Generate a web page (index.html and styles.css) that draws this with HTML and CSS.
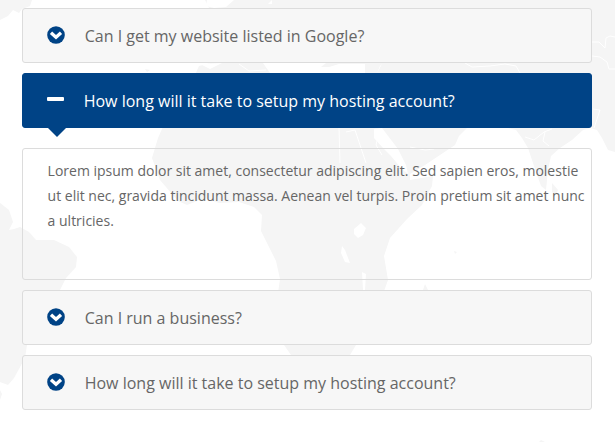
FILE: index.html
```html
<!DOCTYPE html>
<html lang="en">
<head>
<meta charset="utf-8">
<title>FAQ</title>
<link rel="stylesheet" href="styles.css">
</head>
<body>
<svg class="map" viewBox="0 0 615 442" aria-hidden="true">
  <g class="land">
    <path d="M0 0H32L30 6 22 9 19 13 13 10 8 16 0 20Z"/>
    <path d="M205 0H615V152L608 150 602 138 597 130 590 128 583 130 572 140 560 148 551 156 548 170 546 190 541 186 534 166 528 148 522 138 516 130 508 128H467L459 136 455 145 440 155 425 165 410 174 410 180 433 176 432 186 422 205 407 219 390 238 384 256 388 280 380 302 365 320 361 335 356 345 350 355H291L284 345 276 307 280 279 276 261 261 231 262 215 254 207 239 202 219 203 205 198 187 205 178 201 160 180 152 158 158 138 166 120 184 98 195 75 199 66 215 62 203 40 215 20Z"/>
    <path d="M0 203 9 210 13 222 9 230 14 229 20 227 29 232 36 240 54 240 69 247 77 257 76 267 66 278 60 290 45 310 27 345 25 358 14 378 8 385 0 382Z"/>
    <path d="M0 390 2 394 0 400ZM145 69 150 70 147 72ZM541 440 545 442H539ZM425 284 428 290 423 290ZM454 251 457 252 455 254ZM552 183 558 190 556 195 552 192Z"/>
  </g>
  <g class="water">
    <path d="M207 0H234L226 7 214 8 206 6ZM272 0 268 4 272 4ZM263 63H326L321 67 329 67 339 64H365V73H270ZM200 64 222 63 210 69ZM374 129 382 128 398 149 406 165 408 174 401 168 391 156 383 148 374 138ZM354 229 361 223 366 228 363 235 358 238 354 234ZM342 246 345 250 350 263 345 262 341 253ZM362 272 366 274 365 290H363ZM380 66 382 64 377 73Z"/>
  </g>
  <g class="lines">
    <path d="M339 128 340 163M346 132 355 130 366 163M380 128 376 145 382 155M592 42 599 42 605 48 606 38 610 36 615 37M592 56 600 57 607 62 609 69 615 69M465 63 472 67 490 66 505 64 516 66 520 73M239 64 249 71 266 70M593 109 600 110 594 128M525 137 534 140 544 132 552 129M410 147 425 150 434 149M545 132 543 141 549 146"/>
  </g>
</svg>
<main class="faq">
  <section class="question">
    <svg class="icon" viewBox="0 0 18 18"><circle cx="9" cy="9" r="8.8"/><path d="M4 6.8 9 11.2 14 6.8"/></svg>
    <h2>Can I get my website listed in Google?</h2>
  </section>
  <section class="question active">
    <span class="minus"></span>
    <h2>How long will it take to setup my hosting account?</h2>
  </section>
  <section class="answer">
    <p>Lorem ipsum dolor sit amet, consectetur adipiscing elit. Sed sapien eros, molestie ut elit nec, gravida tincidunt massa. Aenean vel turpis. Proin pretium sit amet nunc a ultricies.</p>
  </section>
  <section class="question">
    <svg class="icon" viewBox="0 0 18 18"><circle cx="9" cy="9" r="8.8"/><path d="M4 6.8 9 11.2 14 6.8"/></svg>
    <h2>Can I run a business?</h2>
  </section>
  <section class="question">
    <svg class="icon" viewBox="0 0 18 18"><circle cx="9" cy="9" r="8.8"/><path d="M4 6.8 9 11.2 14 6.8"/></svg>
    <h2>How long will it take to setup my hosting account?</h2>
  </section>
</main>
</body>
</html>
```
FILE: styles.css
```css
* { box-sizing: border-box; }
body {
  margin: 0;
  height: 442px;
  overflow: hidden;
  background: #fff;
  color: #666;
  font-family: "Open Sans", sans-serif;
}
.map {
  position: absolute;
  top: 0;
  left: 0;
  width: 615px;
  height: 442px;
  z-index: -1;
}
.land { fill: #f5f5f5; }
.water { fill: #fff; }
.lines { fill: none; stroke: #fff; stroke-width: 1; }
.faq {
  display: flex;
  flex-direction: column;
  gap: 10px;
  padding: 8px 23px 0 22px;
}
.question {
  position: relative;
  display: flex;
  align-items: center;
  height: 55px;
  padding-left: 24px;
  border: 1px solid #dcdcdc;
  border-radius: 3px;
  background: #f7f7f7;
}
.question h2 {
  margin: 0 0 0 19.7px;
  font-size: 16px;
  font-weight: 400;
  line-height: 24px;
  white-space: nowrap;
}
.icon {
  width: 18px;
  height: 18px;
  margin-bottom: 2px;
  fill: #004386;
}
.icon path {
  fill: none;
  stroke: #fff;
  stroke-width: 3.4;
}
.active {
  border-color: #004386;
  background: #004386;
  color: #fff;
}
.active::after {
  content: "";
  position: absolute;
  top: 54px;
  left: 25px;
  border: solid transparent;
  border-width: 9px 9px 0;
  border-top-color: #004386;
}
.minus {
  width: 17px;
  height: 4px;
  margin-bottom: 3px;
  border-radius: 1px;
  background: #fff;
}
.answer {
  height: 132px;
  margin-top: 10px;
  padding: 9px 5px 0 24.6px;
  border: 1px solid #dcdcdc;
  border-radius: 3px;
}
.answer p {
  margin: 0;
  font-size: 14px;
  line-height: 25px;
}
```
